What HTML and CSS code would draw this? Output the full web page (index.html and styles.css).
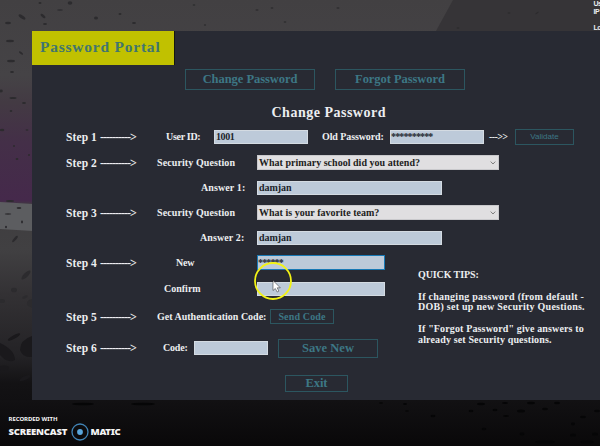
FILE: index.html
```
<!DOCTYPE html>
<html lang="en">
<head>
<meta charset="utf-8">
<title>Password Portal</title>
<link rel="stylesheet" href="styles.css">
</head>
<body>
<svg class="backdrop" viewBox="0 0 600 446" aria-hidden="true">
  <defs>
    <linearGradient id="wall" x1="0" y1="0" x2="0" y2="1">
      <stop offset="0" stop-color="#424042"/><stop offset=".17" stop-color="#454346"/>
      <stop offset=".23" stop-color="#433a43"/><stop offset=".32" stop-color="#442f48"/>
      <stop offset=".45" stop-color="#45294b"/><stop offset=".46" stop-color="#3f3d3f"/>
      <stop offset=".56" stop-color="#414042"/><stop offset=".66" stop-color="#333134"/>
      <stop offset=".8" stop-color="#232225"/><stop offset=".86" stop-color="#131214"/>
      <stop offset=".9" stop-color="#111012"/><stop offset="1" stop-color="#080708"/>
    </linearGradient>
    <linearGradient id="floor" x1="0" y1="0" x2="0" y2="1">
      <stop offset="0" stop-color="#121113"/><stop offset="1" stop-color="#090809"/>
    </linearGradient>
  </defs>
  <rect width="600" height="446" fill="url(#wall)"/>
  <path d="M453 0H600V31H436Z" fill="#363437"/>
  <path d="M0 202L33 204V231L0 229Z" fill="#5c5d60"/>
  <rect y="400" width="600" height="46" fill="url(#floor)"/>
  <g fill="#2c2b2e">
    <ellipse cx="22" cy="17" rx="4" ry="1.5" transform="rotate(35 22 17)"/><ellipse cx="8" cy="23" rx="3" ry="1.2"/>
    <ellipse cx="43" cy="16" rx="3" ry="1.4" transform="rotate(40 43 16)"/><ellipse cx="60" cy="10" rx="3" ry=".8"/>
    <ellipse cx="70" cy="3" rx="2.3" ry="1.8"/><ellipse cx="96" cy="18" rx="2" ry="1.5"/><ellipse cx="45" cy="24" rx="2" ry="1"/>
    <ellipse cx="120" cy="14" rx="1.5" ry="1"/><ellipse cx="134" cy="23" rx="2" ry="1"/><ellipse cx="40" cy="3" rx="1.5" ry="1"/>
    <ellipse cx="194" cy="5" rx="1.3" ry=".8"/><ellipse cx="257" cy="10" rx="1.6" ry=".8"/><ellipse cx="272" cy="8" rx="1.4" ry=".7"/>
    <ellipse cx="338" cy="8" rx="1.6" ry=".7"/><ellipse cx="285" cy="22" rx="1.3" ry=".7"/><ellipse cx="205" cy="25" rx="1.2" ry=".7"/>
    <ellipse cx="509" cy="13" rx="1.3" ry=".7"/><ellipse cx="537" cy="13" rx="2" ry=".7" transform="rotate(-35 537 13)"/><ellipse cx="458" cy="28" rx="1.3" ry=".7"/>
    <ellipse cx="10" cy="41" rx="4" ry="1.2"/><ellipse cx="21" cy="53" rx="2.4" ry="1" transform="rotate(35 21 53)"/>
    <ellipse cx="11" cy="61" rx="4" ry="1.3"/><ellipse cx="12" cy="72" rx="2" ry="1"/><ellipse cx="1" cy="91" rx="1.8" ry="1.4"/>
    <ellipse cx="13" cy="98" rx="3.5" ry="1"/><ellipse cx="24" cy="103" rx="2" ry="1"/><ellipse cx="11" cy="111" rx="1.3" ry="1"/>
    <ellipse cx="2" cy="130" rx="2.3" ry="1.2"/><ellipse cx="27" cy="130" rx="1.4" ry=".8"/><ellipse cx="17" cy="159" rx="1.4" ry=".9"/>
    <ellipse cx="29" cy="155" rx="1" ry="1"/><ellipse cx="14" cy="146" rx="1" ry="1"/><ellipse cx="10" cy="201" rx="4" ry="1"/>
    <ellipse cx="19" cy="208" rx="2.4" ry=".9"/><ellipse cx="8" cy="214" rx="3.3" ry=".8"/><ellipse cx="22" cy="222" rx="1" ry="1.4"/>
    <ellipse cx="6" cy="227" rx="1" ry="1.3"/><ellipse cx="15" cy="239" rx="4" ry="1.3" transform="rotate(-50 15 239)"/>
    <ellipse cx="26" cy="275" rx="6" ry="2.2" transform="rotate(-45 26 275)"/><ellipse cx="14" cy="290" rx="3" ry="2.3"/>
    <ellipse cx="25" cy="297" rx="3" ry="1.3" transform="rotate(-25 25 297)"/><ellipse cx="2" cy="301" rx="3" ry="2"/><path d="M32 299Q26 300 27 305L32 308Z"/>
  </g>
  <g fill="#1a191c">
    <ellipse cx="14" cy="337" rx="7" ry="1.8" transform="rotate(-28 14 337)"/><path d="M0 343Q15 350 15 360Q8 364 0 355Z"/>
    <path d="M32 336Q20 340 20 350Q23 358 32 357Z"/><ellipse cx="4" cy="368" rx="5" ry="2.5"/>
    <ellipse cx="25" cy="378" rx="6" ry="2" transform="rotate(-25 25 378)"/>
  </g>
  <g fill="#060607">
    <ellipse cx="83" cy="404" rx="11" ry="1.3"/><ellipse cx="143" cy="404" rx="12" ry="1.3"/><ellipse cx="481" cy="404" rx="4" ry="1.2"/>
    <ellipse cx="505" cy="403" rx="3" ry="1"/><ellipse cx="531" cy="403" rx="4" ry="1.3"/><ellipse cx="557" cy="403" rx="3" ry="1.3"/>
    <ellipse cx="471" cy="411" rx="2.3" ry="1.3"/><ellipse cx="495" cy="410" rx="2.5" ry="1.3"/><ellipse cx="521" cy="411" rx="4" ry="1.5"/>
    <ellipse cx="545" cy="409" rx="3" ry="1.3"/><ellipse cx="506" cy="416" rx="3" ry="1"/><ellipse cx="433" cy="416" rx="2.4" ry="1.2"/>
    <ellipse cx="583" cy="417" rx="3" ry="1.2"/><ellipse cx="573" cy="424" rx="2" ry="1.4"/><ellipse cx="484" cy="429" rx="2.3" ry="1.2"/>
    <ellipse cx="522" cy="434" rx="2.5" ry="1.4"/><ellipse cx="597" cy="411" rx="3" ry="1.3"/><ellipse cx="573" cy="435" rx="3" ry="1.6"/>
    <ellipse cx="595" cy="434" rx="3" ry="1.6"/><ellipse cx="545" cy="442" rx="10" ry="1.6"/><ellipse cx="587" cy="442" rx="7" ry="1.6"/>
    <ellipse cx="381" cy="403" rx="2" ry=".8"/><ellipse cx="405" cy="404" rx="2" ry=".9"/><ellipse cx="407" cy="411" rx="2" ry=".8"/>
  </g>
</svg>

<header class="session"><p>Us</p><p>IP</p><p class="login">Lo</p></header>

<main class="panel">
  <h1 class="title">Password Portal</h1>
  <nav class="tabs">
    <button class="btn tab">Change Password</button>
    <button class="btn tab">Forgot Password</button>
  </nav>
  <h2 class="heading">Change Password</h2>

  <form class="form">
    <div class="row row-1">
      <span class="step">Step 1 <i>----------&gt;</i></span>
      <label class="label user">User ID:</label>
      <input class="field short digits" value="1001">
      <label class="label old">Old Password:</label>
      <input class="field short stars" value="**********">
      <span class="arrow">---&gt;&gt;</span>
      <button class="btn validate">Validate</button>
    </div>
    <div class="row row-2">
      <span class="step">Step 2 <i>----------&gt;</i></span>
      <label class="label question">Security Question</label>
      <div class="select">What primary school did you attend?<svg viewBox="0 0 6 4"><path d="M.7.6L3 3L5.300.6"/></svg></div>
    </div>
    <div class="row row-3">
      <span class="step"></span>
      <label class="label answer">Answer 1:</label>
      <input class="field long" value="damjan">
    </div>
    <div class="row row-4">
      <span class="step">Step 3 <i>----------&gt;</i></span>
      <label class="label question">Security Question</label>
      <div class="select">What is your favorite team?<svg viewBox="0 0 6 4"><path d="M.7.6L3 3L5.300.6"/></svg></div>
    </div>
    <div class="row row-5">
      <span class="step"></span>
      <label class="label answer second">Answer 2:</label>
      <input class="field long" value="damjan">
    </div>
    <div class="row row-6">
      <span class="step">Step 4 <i>----------&gt;</i></span>
      <label class="label new">New</label>
      <input class="field medium stars focused" value="******">
    </div>
    <div class="row row-7">
      <span class="step"></span>
      <label class="label confirm">Confirm</label>
      <input class="field medium">
    </div>
    <div class="row row-8">
      <span class="step">Step 5 <i>----------&gt;</i></span>
      <label class="label auth">Get Authentication Code:</label>
      <button class="btn send">Send Code</button>
    </div>
    <div class="row row-9">
      <span class="step">Step 6 <i>----------&gt;</i></span>
      <label class="label code">Code:</label>
      <input class="field tiny">
      <button class="btn save">Save New</button>
    </div>
  </form>
  <button class="btn exit">Exit</button>

  <aside class="tips">
    <h3>QUICK TIPS:</h3>
    <p>If changing password (from default -<br>DOB) set up new Security Questions.</p>
    <p class="forgot">If "Forgot Password" give answers to<br>already set Security questions.</p>
  </aside>
</main>

<svg class="pointer" viewBox="0 0 42 42" aria-hidden="true">
  <circle cx="21" cy="21" r="18" fill="none" stroke="#f3f315" stroke-width="1.8"/>
  <path d="M21 20.500V30.500L23.300 28.500L25.200 32L26.900 31.100L25.200 27.800H28.300Z" fill="#fff" stroke="#222" stroke-width=".5"/>
</svg>

<footer class="watermark">
  <span class="recorded">RECORDED WITH</span>
  <span class="brand"><b class="cast">SCREENCAST</b>
    <svg viewBox="0 0 18 18" aria-hidden="true"><circle cx="9" cy="9" r="8" fill="none" stroke="#4184b5" stroke-width="1.300"/><circle cx="9" cy="9" r="2.900" fill="#5aa7dc"/></svg>
    <b class="matic">MATIC</b></span>
</footer>
</body>
</html>
```
FILE: styles.css
```
* { box-sizing: border-box; margin: 0; padding: 0; }

body {
  width: 600px;
  height: 446px;
  position: relative;
  overflow: hidden;
  background: #111;
  color: #eceef0;
  font: bold 10px/12px "Liberation Serif", serif;
  white-space: nowrap;
}

.backdrop { position: absolute; inset: 0; width: 600px; height: 446px; }

.session {
  position: relative;
  height: 31px;
  padding-left: 593.500px;
  overflow: hidden;
  font: bold 7px/8.500px "Liberation Sans", sans-serif;
  letter-spacing: -.5px;
}
.session p { height: 8.300px; margin-top: -.3px; }
.session .login { margin-top: 8px; }

.panel {
  position: relative;
  height: 369px;
  margin-left: 32px;
  background: #282a33;
  display: flex;
  flex-direction: column;
}

.title {
  width: 143px;
  height: 34px;
  padding-left: 8px;
  background: #c1c100;
  border-right: 1px solid #15170f;
  color: #41756f;
  font-size: 15.500px;
  line-height: 32px;
  letter-spacing: .77px;
}

.btn {
  font: bold 10px/1 "Liberation Serif", serif;
  color: #3d7785;
  background: transparent;
  border: 1px solid #2c5660;
  flex: none;
}

.tabs { display: flex; gap: 20px; margin: 4px 0 0 153px; height: 21px; }
.tab { width: 130px; font-size: 12.500px; letter-spacing: -.05px; }

.heading { margin: 15px 0 0 239.500px; font-size: 14px; line-height: 16px; letter-spacing: .5px; }

.form { display: flex; flex-direction: column; height: 229px; margin-top: 8px; }
.row { display: flex; align-items: center; height: 15px; flex: none; }
.row-2 { margin-top: 11px; }
.row-3, .row-4, .row-5, .row-6 { margin-top: 10px; }
.row-7 { margin-top: 11px; }
.row-8 { margin-top: 13px; }
.row-9 { margin-top: 15px; height: 18px; }

.step { width: 125px; padding-left: 34px; font-size: 11.500px; letter-spacing: .1px; flex: none; }
.step i { font-style: normal; font-size: 12px; letter-spacing: -1px; }

.label { flex: none; width: 100px; }
.user { padding-left: 9px; width: 57px; letter-spacing: -.3px; }
.old { width: 82px; padding-left: 14px; letter-spacing: -.1px; }
.question { letter-spacing: .1px; }
.answer { padding-left: 44px; letter-spacing: .1px; }
.second { padding-left: 43px; }
.new { padding-left: 19px; letter-spacing: -.2px; }
.confirm { padding-left: 7px; }
.auth { width: 113px; }
.code { width: 37px; padding-left: 6px; letter-spacing: -.2px; }

.field {
  height: 14px;
  padding: 0 1px;
  border: 1px solid #d4dbe2;
  background: #bdcad9;
  color: #20242b;
  font: bold 10px/12px "Liberation Serif", serif;
  letter-spacing: -.05px;
  outline: none;
  flex: none;
}
.short { width: 94px; }
.long { width: 185px; }
.medium { width: 128px; }
.tiny { width: 74px; }
.digits { letter-spacing: -.4px; }
.stars { padding-left: 0; letter-spacing: -.85px; }
.focused { border-color: #1879b5; height: 15px; }

.select {
  width: 242px;
  height: 15px;
  padding: 0 2px 0 1px;
  border: 1px solid #c9c9cc;
  background: #e0dfe1;
  color: #1d1d20;
  line-height: 13px;
  letter-spacing: .02px;
  display: flex;
  justify-content: space-between;
  align-items: center;
}
.select svg { width: 6px; height: 4px; fill: none; stroke: #666; stroke-width: .8; }

.arrow { width: 31px; padding-left: 5px; letter-spacing: -.6px; }
.validate { width: 59px; height: 16px; font: 8px/1 "Liberation Sans", sans-serif; }
.send { width: 64px; height: 15px; letter-spacing: .15px; }
.save { width: 100px; height: 19px; margin-left: 10px; font-size: 12.500px; letter-spacing: .05px; }
.exit { width: 63px; height: 17px; margin: 17px 0 0 253px; font-size: 12.500px; letter-spacing: -.1px; }

/* Sits in the free area to the right of the lower form rows. */
.tips { position: absolute; left: 386px; top: 239px; line-height: 10.800px; letter-spacing: .26px; }
.tips h3 { font-size: 10px; letter-spacing: -.1px; margin-bottom: 10.800px; }
.forgot { margin-top: 10.800px; letter-spacing: .14px; }

.pointer { position: absolute; left: 252px; top: 259.500px; width: 42px; height: 42px; }

.watermark {
  position: relative;
  display: flex;
  flex-direction: column;
  margin: 15px 0 0 8.500px;
  color: #f5f5f5;
  font: bold 6px/8px "Noto Sans", sans-serif;
}
.recorded { letter-spacing: -.05px; }
.brand { display: flex; align-items: center; height: 17px; font-size: 9.500px; }
.brand svg { width: 18px; height: 18px; margin: 0 2px; }
.cast { width: 60px; letter-spacing: -.2px; }
.matic { letter-spacing: -.3px; }
```
